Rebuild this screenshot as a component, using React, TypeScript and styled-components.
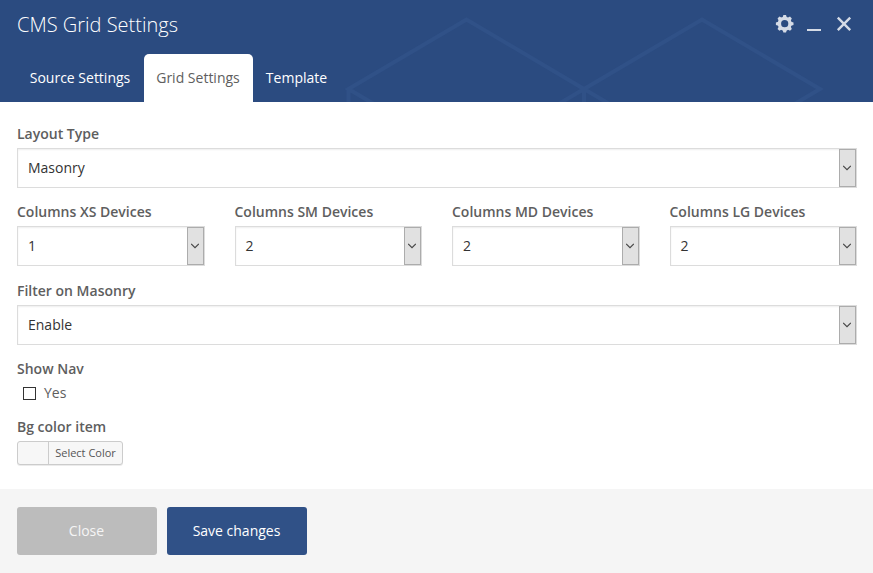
import React from "react";
import styled, { createGlobalStyle, css } from "styled-components";

const GlobalStyle = createGlobalStyle`
  *, *::before, *::after { box-sizing: border-box; }
  body { margin: 0; background: #fff; }
  button, select, input { font: inherit; }
`;

const Panel = styled.div`
  display: flex;
  flex-direction: column;
  height: 573px;
  color: #5e5e5e;
  font: 400 14px/20px "Open Sans", "Noto Sans", sans-serif;
`;

const Header = styled.header`
  position: relative;
  display: flex;
  flex-direction: column;
  justify-content: space-between;
  height: 102px;
  background: #2b4b80;
  color: #fff;
  overflow: hidden;
`;

const Pattern = styled.svg`
  position: absolute;
  inset: 0;
  pointer-events: none;
`;

const TitleBar = styled.div`
  position: relative;
  display: flex;
  justify-content: space-between;
  height: 50px;
  padding: 0 20px 0 17px;
`;

const Title = styled.h1`
  margin: 11px 0 0;
  font-size: 20px;
  font-weight: 300;
  line-height: 28px;
`;

const Controls = styled.div`
  display: flex;
  gap: 12px;
  padding-top: 14px;
`;

const IconButton = styled.button`
  display: flex;
  width: 18px;
  height: 20px;
  padding: 0;
  border: 0;
  background: none;
  color: #d5dbe6;

  svg { flex: none; overflow: visible; }
`;

const Tabs = styled.nav`
  position: relative;
  display: flex;
  padding-left: 17px;
`;

const Tab = styled.button<{ $active?: boolean; $width: number }>`
  width: ${(p) => p.$width}px;
  height: 48px;
  padding: 0 1px 0 0;
  border: 0;
  border-radius: 5px 5px 0 0;
  background: ${(p) => (p.$active ? "#fff" : "transparent")};
  color: ${(p) => (p.$active ? "#5e5e5e" : "#fff")};
  line-height: 48px;
  white-space: nowrap;
`;

const Body = styled.main`
  flex: 1;
  padding: 22px 16px 0 17px;
`;

const Row = styled.div<{ $height: number }>`
  display: grid;
  grid-auto-flow: column;
  grid-auto-columns: minmax(0, 1fr);
  gap: 30px;
  height: ${(p) => p.$height}px;
`;

const Label = styled.div`
  height: 24px;
  font-weight: 600;
  line-height: 20px;
  white-space: nowrap;
`;

const SelectBox = styled.div`
  display: flex;
  justify-content: space-between;
  height: 40px;
  padding-left: 10px;
  border: 1px solid #dcdcdc;
  background: #fff;
  box-shadow: inset 0 1px 2px rgba(0, 0, 0, 0.07);
  color: #333;
  line-height: 38px;
`;

const Arrow = styled.span`
  display: flex;
  align-items: center;
  justify-content: center;
  width: 17px;
  padding-right: 1px;
  border: 1px solid #acacac;
  background: #e1e1e1;
`;

const CheckRow = styled.label`
  display: flex;
  align-items: center;
  gap: 8px;
  height: 20px;
  padding-left: 6px;
`;

const CheckBox = styled.input`
  appearance: none;
  width: 13px;
  height: 13px;
  margin: 1px 0 0;
  border: 1px solid #333;
  background: #fff;
`;

const ColorButton = styled.button`
  display: flex;
  width: 106px;
  height: 24px;
  padding: 0;
  border: 1px solid #ccc;
  border-radius: 3px;
  background: #f7f7f7;
  box-shadow: 0 1px 0 rgba(0, 0, 0, 0.08);
  color: #555;
  font-size: 11px;
  line-height: 22px;
`;

const Swatch = styled.span`
  width: 31px;
  height: 22px;
  border-right: 1px solid #ccc;
`;

const ColorText = styled.span`
  flex: 1;
  text-align: center;
  white-space: nowrap;
`;

const Footer = styled.footer`
  display: flex;
  gap: 10px;
  height: 84px;
  padding: 18px 17px;
  background: #f5f5f5;
`;

const Button = styled.button<{ $primary?: boolean }>`
  width: 140px;
  height: 48px;
  padding: 0 1px 0 0;
  border: 0;
  border-radius: 3px;
  color: #fff;
  ${(p) =>
    p.$primary
      ? css`background: #305187;`
      : css`background: #bcbcbc; color: #f5f5f5;`}
`;

function Select({ label, value }: { label: string; value: string }) {
  return (
    <div>
      <Label>{label}</Label>
      <SelectBox role="combobox" aria-label={label}>
        {value}
        <Arrow>
          <svg width="8" height="6" viewBox="0 0 8 6" fill="none" stroke="#444" strokeWidth="1.1">
            <path d="M.2 .8 4 4.6 7.8 .8" />
          </svg>
        </Arrow>
      </SelectBox>
    </div>
  );
}

const teeth = [0, 45, 90, 135, 180, 225, 270, 315];

export default function App() {
  return (
    <>
      <GlobalStyle />
      <Panel>
        <Header>
          <Pattern width="873" height="102" fill="none" stroke="#305187" strokeWidth="4">
            <path d="M584 89 466.5 19.5 348.5 89 466.5 158.5 584 89M584 89 702 19.5 820 89 702 158.5 584 89V102M348.5 89V102" />
          </Pattern>
          <TitleBar>
            <Title>CMS Grid Settings</Title>
            <Controls>
              <IconButton aria-label="Settings">
                <svg width="18" height="20" viewBox="0 0 18 20">
                  <g fill="currentColor">
                    {teeth.map((a) => (
                      <path key={a} d="M7.4 4 8.4 .9H11L12 4Z" transform={`rotate(${a} 9.7 9.7)`} />
                    ))}
                  </g>
                  <circle cx="9.7" cy="9.7" r="5.3" fill="none" stroke="currentColor" strokeWidth="3.4" />
                </svg>
              </IconButton>
              <IconButton aria-label="Minimize">
                <svg width="18" height="20">
                  <path d="M2 15H16V17H2Z" fill="currentColor" />
                </svg>
              </IconButton>
              <IconButton aria-label="Close panel">
                <svg width="18" height="20" fill="none" stroke="currentColor" strokeWidth="2.4">
                  <path d="M2.8 3.7 15.2 16.1M15.2 3.7 2.8 16.1" />
                </svg>
              </IconButton>
            </Controls>
          </TitleBar>
          <Tabs>
            <Tab $width={127}>Source Settings</Tab>
            <Tab $width={109} $active>Grid Settings</Tab>
            <Tab $width={88}>Template</Tab>
          </Tabs>
        </Header>
        <Body>
          <Row $height={78}>
            <Select label="Layout Type" value="Masonry" />
          </Row>
          <Row $height={79}>
            <Select label="Columns XS Devices" value="1" />
            <Select label="Columns SM Devices" value="2" />
            <Select label="Columns MD Devices" value="2" />
            <Select label="Columns LG Devices" value="2" />
          </Row>
          <Row $height={78}>
            <Select label="Filter on Masonry" value="Enable" />
          </Row>
          <Row $height={58}>
            <div>
              <Label>Show Nav</Label>
              <CheckRow>
                <CheckBox type="checkbox" />
                Yes
              </CheckRow>
            </div>
          </Row>
          <Label>Bg color item</Label>
          <ColorButton>
            <Swatch />
            <ColorText>Select Color</ColorText>
          </ColorButton>
        </Body>
        <Footer>
          <Button>Close</Button>
          <Button $primary>Save changes</Button>
        </Footer>
      </Panel>
    </>
  );
}
